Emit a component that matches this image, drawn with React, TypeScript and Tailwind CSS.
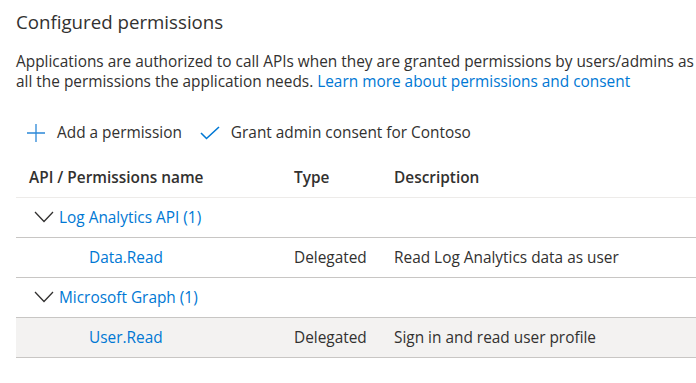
import { ReactNode } from "react";

const font = { fontFamily: '"Open Sans", "Noto Sans", sans-serif' };

function Plus() {
  return (
    <svg width="20" height="20" viewBox="0 0 20 20" className="shrink-0">
      <path d="M10 1v18M1 10h18" stroke="#2b88d8" strokeWidth="1.3" fill="none" />
    </svg>
  );
}

function Check() {
  return (
    <svg width="20" height="14" viewBox="0 0 20 14" className="shrink-0">
      <path d="M1 7l5.5 5.5L19 1" stroke="#0078d4" strokeWidth="1.6" fill="none" />
    </svg>
  );
}

function Chevron() {
  return (
    <svg width="20" height="12" viewBox="0 0 20 12" className="shrink-0">
      <path d="M1 1l9 9.5L19 1" stroke="#323130" strokeWidth="1.3" fill="none" />
    </svg>
  );
}

function Row({ children, selected }: { children: ReactNode; selected?: boolean }) {
  return (
    <div
      className={`grid h-10 grid-cols-[278px_100px_1fr] items-center border-b border-[#c8c6c4] ${
        selected ? "bg-[#f3f2f1]" : ""
      }`}
    >
      {children}
    </div>
  );
}

const groups = [
  { name: "Log Analytics API (1)", perm: "Data.Read", desc: "Read Log Analytics data as user" },
  { name: "Microsoft Graph (1)", perm: "User.Read", desc: "Sign in and read user profile", selected: true },
];

export default function App() {
  return (
    <main className="h-[383px] w-[696px] overflow-hidden bg-white text-[#323130]" style={font}>
      <div className="pl-4">
        <h1 className="pt-[8px] text-[18.7px] leading-[28px] font-normal">Configured permissions</h1>
        <p className="mt-[16px] whitespace-nowrap text-[15.4px] leading-[20px]">
          Applications are authorized to call APIs when they are granted permissions by users/admins as
          <br />
          all the permissions the application needs.{" "}
          <a className="text-[#0078d4]">Learn more about permissions and consent</a>
        </p>

        <div className="mt-[21px] flex h-10 items-center text-[15.4px]">
          <button className="flex items-center gap-[11px] pl-[10px] pr-[18px]">
            <Plus />
            <span>Add a permission</span>
          </button>
          <button className="flex items-center gap-[11px]">
            <Check />
            <span>Grant admin consent for Contoso</span>
          </button>
        </div>

        <div className="mt-[5px] text-[15.4px]">
          <div className="grid h-10 grid-cols-[278px_100px_1fr] items-center border-b border-[#edebe9] font-semibold">
            <div className="pl-[13px]">API / Permissions name</div>
            <div>Type</div>
            <div>Description</div>
          </div>
          {groups.map((g) => (
            <div key={g.name}>
              <Row>
                <div className="col-span-3 flex items-center gap-[5px] pl-[18px] text-[#0078d4]">
                  <Chevron />
                  <span>{g.name}</span>
                </div>
              </Row>
              <Row selected={g.selected}>
                <div className="pl-[73px] text-[#0078d4]">{g.perm}</div>
                <div>Delegated</div>
                <div>{g.desc}</div>
              </Row>
            </div>
          ))}
        </div>
      </div>
    </main>
  );
}
